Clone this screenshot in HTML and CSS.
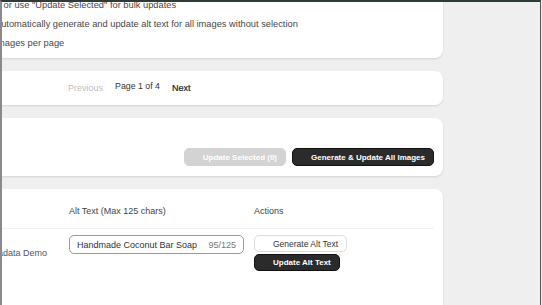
FILE: index.html
```html
<!DOCTYPE html>
<html lang="en">
<head>
    <meta charset="UTF-8">
    <meta name="viewport" content="width=device-width, initial-scale=1.0">
    <title>Alt Text Manager</title>
    <link rel="stylesheet" href="styles.css">
</head>
<body>
    <div class="frame">
        <div class="content">
            <div class="card help">
                <p class="note tail">text or use "Update Selected" for bulk updates</p>
                <p class="note">Automatically generate and update alt text for all images without selection</p>
                <p class="note">images per page</p>
            </div>

            <div class="card pager">
                <button class="link-btn" disabled>Previous</button>
                <span class="page-label">Page 1 of 4</span>
                <button class="link-btn next">Next</button>
            </div>

            <div class="card toolbar">
                <button class="btn btn-muted" disabled>Update Selected (0)</button>
                <button class="btn btn-dark">Generate &amp; Update All Images</button>
            </div>

            <div class="card table">
                <div class="row head">
                    <div class="cell name"></div>
                    <div class="cell">Alt Text (Max 125 chars)</div>
                    <div class="cell">Actions</div>
                </div>
                <div class="row">
                    <div class="cell name"><span class="product">Metadata Demo</span></div>
                    <div class="cell">
                        <div class="alt-input">
                            <span>Handmade Coconut Bar Soap</span>
                            <span class="count">95/125</span>
                        </div>
                    </div>
                    <div class="cell actions">
                        <button class="btn btn-light">Generate Alt Text</button>
                        <button class="btn btn-dark">Update Alt Text</button>
                    </div>
                </div>
            </div>
        </div>
    </div>
</body>
</html>
```

FILE: styles.css
```css
body {
    margin: 0;
    font-family: "Liberation Sans", Arial, sans-serif;
    background-color: #efefef;
}

.frame {
    height: 100vh;
    width: 541px;
    box-sizing: border-box;
    border-top: 2px solid #2f3b37;
    border-left: 2px solid #8a8a8a;
    border-right: 1px solid #555;
    overflow: hidden;
}

.content {
    margin-left: -40px;
    margin-top: -18px;
    width: 481px;
    display: flex;
    flex-direction: column;
    gap: 13px;
}

.card {
    background: white;
    border-radius: 8px;
    box-shadow: 0 1px 2px rgba(0, 0, 0, 0.12);
    padding: 0 9px 0 32px;
}

.help {
    padding-top: 12px;
    padding-bottom: 5px;
}

.note {
    margin: 0;
    font-size: 9.3px;
    line-height: 19px;
    color: #474747;
    white-space: nowrap;
    text-indent: 1px;
}

.note.tail {
    text-indent: -8px;
}

.pager {
    height: 34px;
    display: flex;
    align-items: center;
    gap: 12px;
    padding-left: 106px;
}

.link-btn {
    border: none;
    background: none;
    padding: 0;
    font-family: inherit;
    font-size: 9px;
    color: #1a1a1a;
}

.link-btn:disabled {
    color: #bdbdbd;
}

.next {
    -webkit-text-stroke: 0.2px #1a1a1a;
}

.page-label {
    font-size: 8.8px;
    color: #333;
    margin-bottom: 5px;
}

.toolbar {
    display: flex;
    justify-content: flex-end;
    gap: 6px;
    padding-top: 30px;
    padding-bottom: 10px;
}

.btn {
    height: 18px;
    padding: 0 8px 0 18px;
    border-radius: 5px;
    font-family: inherit;
    font-size: 8px;
    font-weight: bold;
    text-align: left;
    cursor: pointer;
}

.btn-dark {
    background-color: #2b2b2b;
    border: 1px solid #111;
    color: white;
}

.btn-muted {
    background-color: #d3d3d3;
    border: 1px solid #d3d3d3;
    color: white;
}

.btn-light {
    background-color: white;
    border: 1px solid #dcdcdc;
    color: #333;
    font-size: 8.5px;
    font-weight: normal;
}

.table {
    padding-bottom: 60px;
}

.row {
    display: grid;
    grid-template-columns: 75px 185px 180px;
    font-size: 9px;
    color: #444;
}

.row.head {
    padding: 16px 0 11px;
    line-height: 12px;
    border-bottom: 1px solid #f0f0f0;
}

.row .cell {
    padding-top: 6px;
}

.row.head .cell {
    padding-top: 0;
}

.name {
    align-self: center;
    white-space: nowrap;
}

.product {
    margin-left: -11px;
    color: #555;
}

.alt-input {
    width: 175px;
    height: 19px;
    box-sizing: border-box;
    border: 1px solid #9a9a9a;
    border-radius: 5px;
    display: flex;
    align-items: center;
    justify-content: space-between;
    padding: 0 7px 0 7px;
    font-size: 9px;
    color: #333;
    white-space: nowrap;
}

.count {
    color: #777;
    font-size: 9px;
}

.actions {
    display: flex;
    flex-direction: column;
    align-items: flex-start;
    gap: 2px;
}

.actions .btn {
    height: 17px;
}
```
